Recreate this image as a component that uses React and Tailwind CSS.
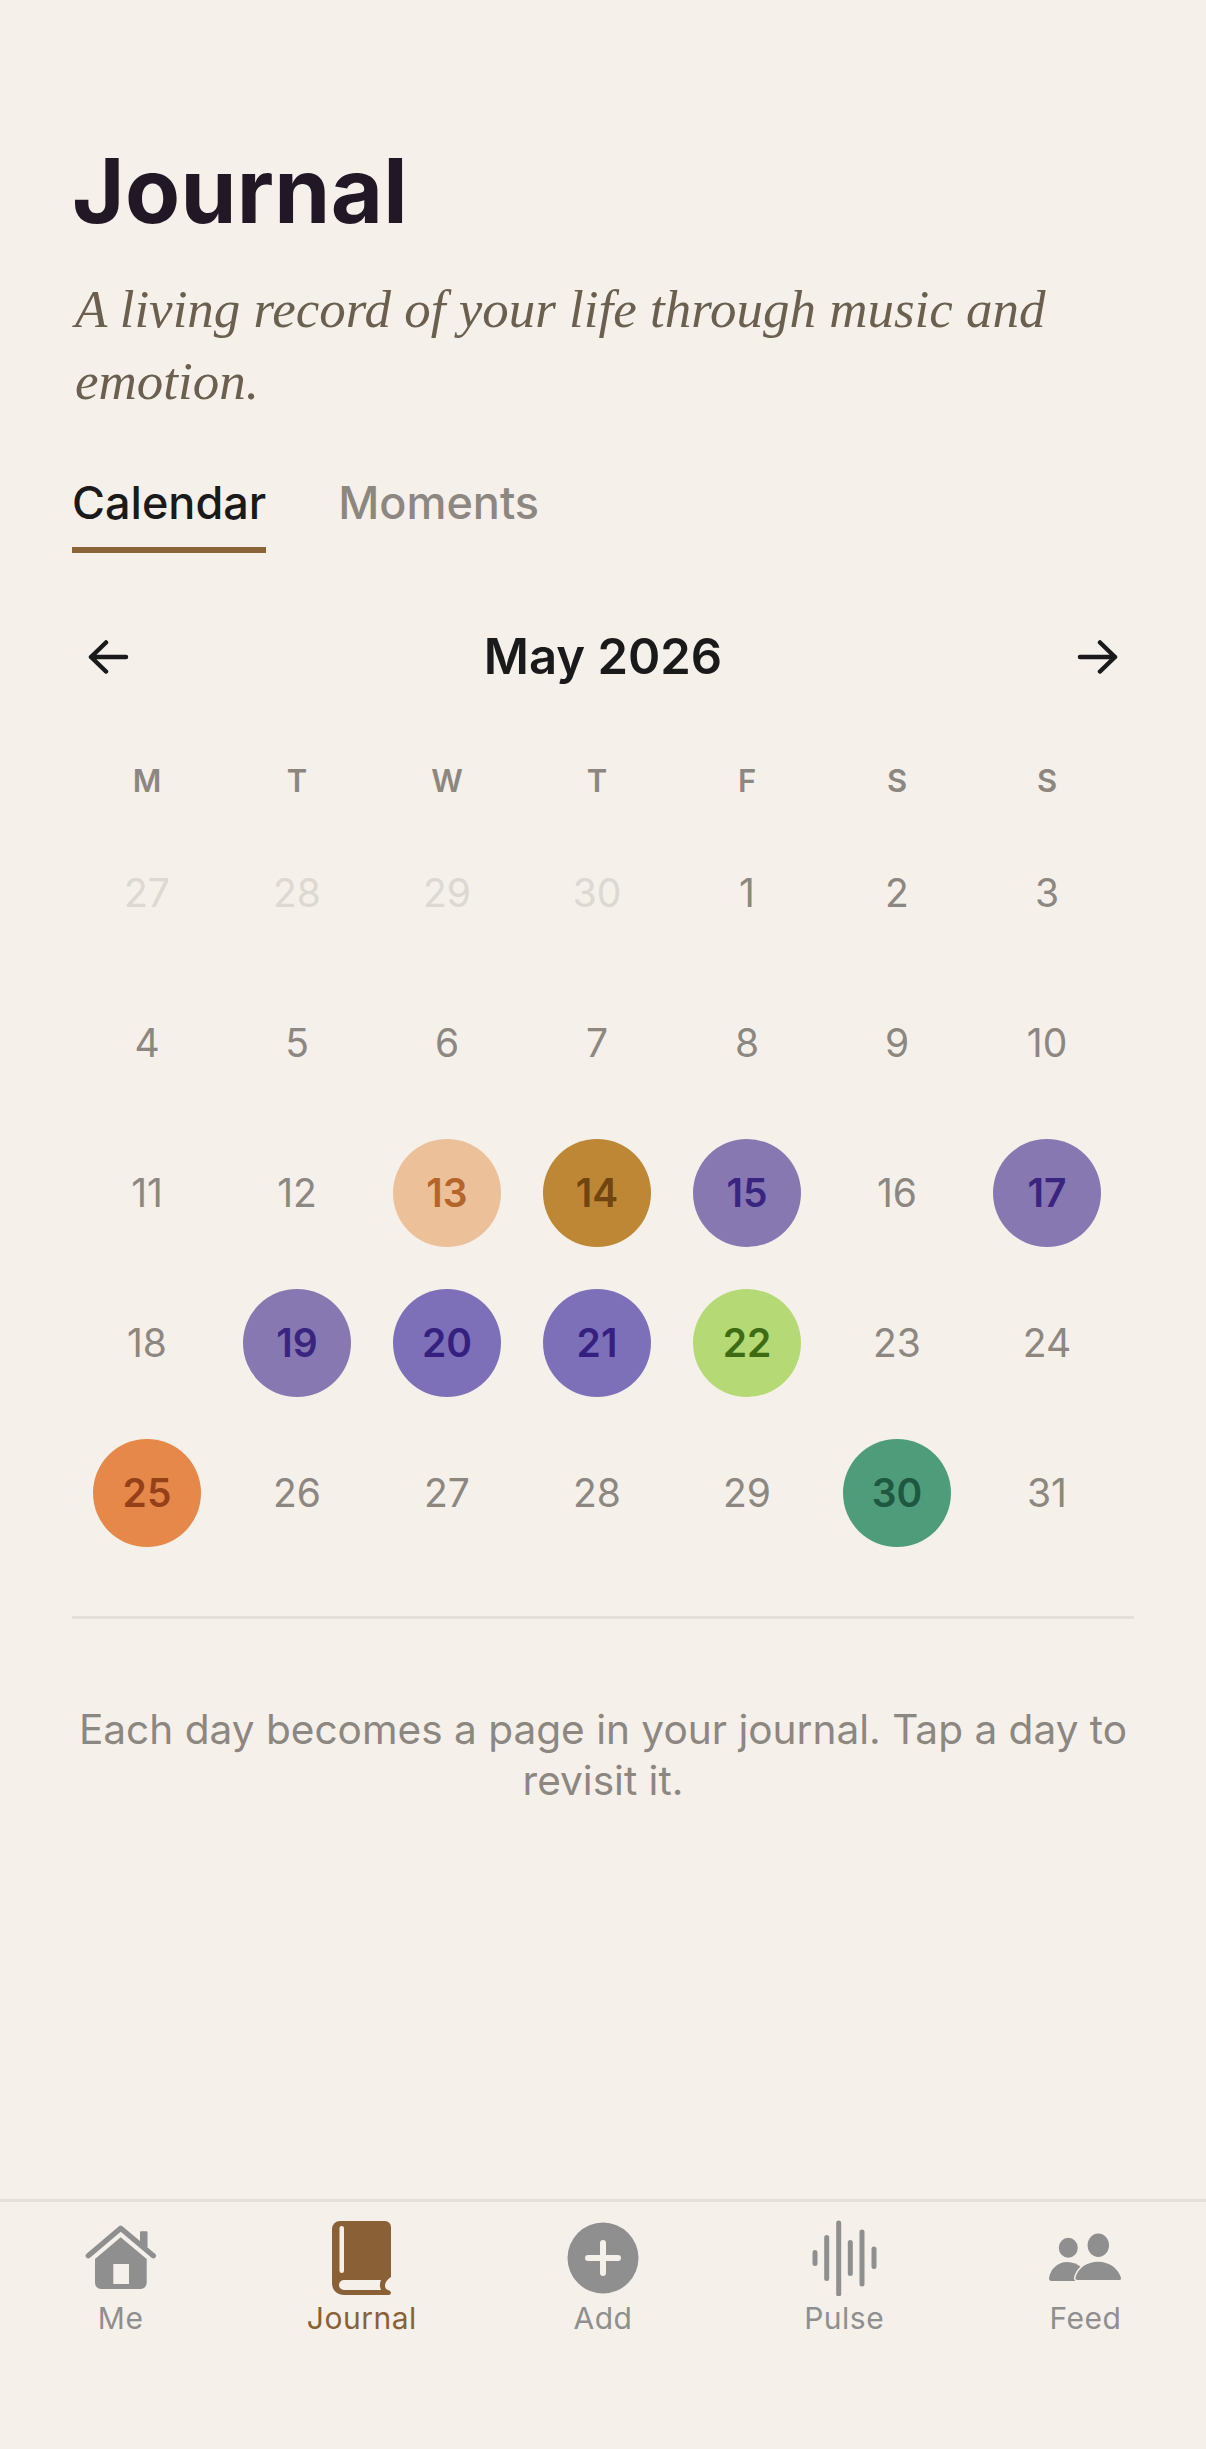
import React from 'react'

const weekDays = ['M', 'T', 'W', 'T', 'F', 'S', 'S']

const days = [
  { n: 27, faded: true }, { n: 28, faded: true }, { n: 29, faded: true }, { n: 30, faded: true },
  { n: 1 }, { n: 2 }, { n: 3 }, { n: 4 }, { n: 5 }, { n: 6 }, { n: 7 }, { n: 8 }, { n: 9 }, { n: 10 },
  { n: 11 }, { n: 12 },
  { n: 13, mood: 'bg-[#ecc19a] text-[#b5652a]' },
  { n: 14, mood: 'bg-[#bd8735] text-[#704510]' },
  { n: 15, mood: 'bg-[#8878b2] text-[#392580]' },
  { n: 16 },
  { n: 17, mood: 'bg-[#8878b2] text-[#392580]' },
  { n: 18 },
  { n: 19, mood: 'bg-[#8878b2] text-[#392580]' },
  { n: 20, mood: 'bg-[#7e70b8] text-[#35207f]' },
  { n: 21, mood: 'bg-[#7e70b8] text-[#35207f]' },
  { n: 22, mood: 'bg-[#b5da75] text-[#3e6b13]' },
  { n: 23 }, { n: 24 },
  { n: 25, mood: 'bg-[#e7884b] text-[#96401a]' },
  { n: 26 }, { n: 27 }, { n: 28 }, { n: 29 },
  { n: 30, mood: 'bg-[#4f9c7a] text-[#1e5840]' },
  { n: 31 },
]

function ArrowLeft() {
  return (
    <svg width="42" height="36" viewBox="0 0 42 36" fill="none" stroke="#1a1a1a" strokeWidth="4.5" strokeLinecap="round" strokeLinejoin="round">
      <path d="M38 18H3M18 3.5 3 18l15 14.5" />
    </svg>
  )
}

function ArrowRight() {
  return (
    <svg width="42" height="36" viewBox="0 0 42 36" fill="none" stroke="#1a1a1a" strokeWidth="4.5" strokeLinecap="round" strokeLinejoin="round">
      <path d="M4 18h35M24 3.5 39 18 24 32.5" />
    </svg>
  )
}

function HouseIcon() {
  return (
    <svg width="72" height="66" viewBox="0 0 72 66" fill="#8f8f8f">
      <path d="M55 7.3a1 1 0 0 1 1-1h5.5a1 1 0 0 1 1 1V22H55z" />
      <path d="M3.3 30.7 35.7 3.3l32.6 27.4" fill="none" stroke="#8f8f8f" strokeWidth="5.4" strokeLinecap="round" strokeLinejoin="round" />
      <path fillRule="evenodd" d="M35.7 12.3 61.7 34v24a6 6 0 0 1-6 6H16a6 6 0 0 1-6-6V34zM28.3 39v20H44V39z" />
    </svg>
  )
}

function BookIcon() {
  return (
    <svg width="59" height="74" viewBox="0 0 59 74" fill="#8a6136">
      <path d="M8 0h45a6 6 0 0 1 6 6v50c-3 2-6 5-6 9 0 3 3 4 5 5a2.2 2.2 0 0 1-1 4H12C5 74 0 69 0 62V8a8 8 0 0 1 8-8z" />
      <path d="M12 59h37c-1.5 3-1.5 7 0 10H12a5 5 0 0 1 0-10z" fill="#f5f0ea" />
      <rect x="7.5" y="5" width="4.5" height="47" rx="2.2" fill="#f5f0ea" />
    </svg>
  )
}

function AddIcon() {
  return (
    <svg width="72" height="72" viewBox="0 0 72 72">
      <circle cx="36" cy="36" r="35.5" fill="#8f8f8f" />
      <path d="M36 21v30M21 36h30" stroke="#f5f0ea" strokeWidth="6" strokeLinecap="round" />
    </svg>
  )
}

function PulseIcon() {
  return (
    <svg width="66" height="76" viewBox="0 0 66 76" stroke="#8f8f8f" strokeWidth="5" strokeLinecap="round">
      <path d="M4 32.500v11M15.700 17.500v41M27.700 3v71M39.300 22.500v31M51 12v52M63 29v17.500" />
    </svg>
  )
}

function FeedIcon() {
  return (
    <svg width="76" height="54" viewBox="0 0 76 54" fill="#8f8f8f">
      <ellipse cx="21.300" cy="16.700" rx="9.500" ry="10" />
      <ellipse cx="51.300" cy="14.300" rx="10.700" ry="11.700" />
      <path d="M2 50c-1 0-2-1-2-2.500C1 38 9 31 18 31c6 0 11 2 15 6v13z" transform="translate(2 0)" />
      <path d="M30.500 49c-1.500 0-2.500-1-2-2.500C31 37 40 30.700 51 30.700s20 6.300 23 16c.3 1.500-.5 2.300-2 2.300z" stroke="#f5f0ea" strokeWidth="3" paintOrder="stroke" />
    </svg>
  )
}

const tabs = [
  { label: 'Me', icon: HouseIcon },
  { label: 'Journal', icon: BookIcon, active: true },
  { label: 'Add', icon: AddIcon },
  { label: 'Pulse', icon: PulseIcon },
  { label: 'Feed', icon: FeedIcon },
]

export default function App() {
  return (
    <div className="flex h-[2449px] w-[1206px] flex-col bg-[#f5f0ea] font-['Inter',sans-serif]">
      <div className="flex-1 pt-[137px]">
        <div className="px-[72px]">
          <h1 className="text-[90px] leading-[108px] font-bold tracking-[0.3px] text-[#221725]">Journal</h1>
          <p className="mt-[28px] pl-[3px] font-['Liberation_Serif',serif] text-[53px] leading-[72px] text-[#6b5f50] italic">
            A living record of your life through music and emotion.
          </p>

          {/* Tabs */}
          <div className="mt-[59px] flex gap-[72px]">
            <div className="border-b-[6px] border-[#8b6339] pb-[17px] text-[45px] leading-[54px] font-medium text-[#1a1a1a]">Calendar</div>
            <div className="pb-[17px] text-[45px] leading-[54px] font-medium text-[#8c8780]">Moments</div>
          </div>

          {/* Month switcher */}
          <div className="mt-[71px] flex h-[66px] items-center justify-between px-[16px]">
            <ArrowLeft />
            <span className="text-[49px] leading-[66px] font-semibold text-[#1a1a1a]">May 2026</span>
            <ArrowRight />
          </div>

          {/* Calendar grid */}
          <div className="mt-[73px] grid grid-cols-[repeat(7,150px)]">
            {weekDays.map((d, i) => (
              <div key={i} className="text-center text-[31px] leading-[36px] font-semibold text-[#8c8780]">{d}</div>
            ))}
          </div>
          <div className="mt-[19px] grid grid-cols-[repeat(7,150px)] auto-rows-[150px]">
            {days.map((d, i) => (
              <div key={i} className="flex items-center justify-center">
                {d.mood ? (
                  <span className={`flex h-[108px] w-[108px] items-center justify-center rounded-full text-[39px] font-semibold ${d.mood}`}>{d.n}</span>
                ) : (
                  <span className={`text-[39px] ${d.faded ? 'text-[#dcd8d2]' : 'text-[#8c8780]'}`}>{d.n}</span>
                )}
              </div>
            ))}
          </div>

          <div className="mt-[48px] border-t-[3px] border-[#e3dfd9]" />
          <p className="mt-[85px] text-center text-[40.6px] leading-[51px] text-[#8c8780]">
            Each day becomes a page in your journal. Tap a day to revisit it.
          </p>
        </div>
      </div>

      {/* Bottom nav */}
      <nav className="flex h-[250px] border-t-[3px] border-[#e3dfd9] pt-[18px]">
        {tabs.map(({ label, icon: Icon, active }) => (
          <div key={label} className="flex flex-1 flex-col items-center">
            <div className="flex h-[76px] items-center justify-center">
              <Icon />
            </div>
            <span className={`mt-[4px] text-[30px] leading-[36px] tracking-[0.5px] ${active ? 'text-[#8a6136]' : 'text-[#8f8f8f]'}`}>{label}</span>
          </div>
        ))}
      </nav>
    </div>
  )
}
